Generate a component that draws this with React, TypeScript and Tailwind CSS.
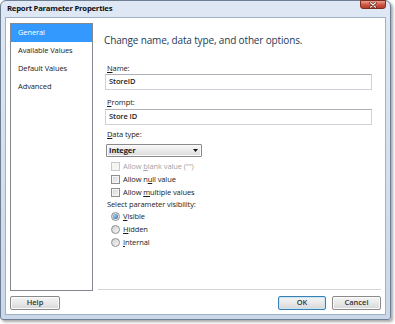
import React from "react";

function Checkbox({ disabled }: { disabled?: boolean }) {
  return disabled ? (
    <span className="w-[9px] h-[9px] shrink-0 border border-[#c9c9c9] bg-[#f5f5f5]" />
  ) : (
    <span className="w-[9px] h-[9px] shrink-0 border border-[#8e8f8f] bg-gradient-to-br from-[#d2d2d2] to-[#f8f8f8] shadow-[inset_0_0_0_1px_#f4f4f4]" />
  );
}

function Radio({ checked }: { checked?: boolean }) {
  return (
    <span className="w-[9px] h-[9px] shrink-0 rounded-full border border-[#8e8f8f] bg-gradient-to-br from-[#d0d0d0] to-[#fafafa] flex items-center justify-center">
      {checked && (
        <span className="w-[5px] h-[5px] rounded-full bg-[radial-gradient(circle_at_35%_35%,#9fd0f5,#1a5ea8)]" />
      )}
    </span>
  );
}

function Button({ children, w, primary }: { children: React.ReactNode; w: string; primary?: boolean }) {
  return (
    <div
      className={
        (primary
          ? "border-[#3c7fb1] shadow-[inset_0_0_0_1px_#c6e6f8] "
          : "border-[#8a8a8a] shadow-[inset_0_0_0_1px_#fbfbfb] ") +
        w +
        " h-[14px] border rounded-[2px] bg-gradient-to-b from-[#f4f4f4] via-[#e9e9e9] to-[#d6d6d6] flex items-center justify-center text-[7.5px] font-semibold text-[#333] leading-none"
      }
    >
      {children}
    </div>
  );
}

export default function App() {
  return (
    <div className="w-[395px] h-[324px] bg-white overflow-hidden font-['Open_Sans',sans-serif] text-[#1b1b1b]">
      <div className="relative w-[391px] h-[320px] border border-[#6e7f94] rounded-t-[6px] rounded-b-[3px] bg-gradient-to-b from-[#dfe8f4] to-[#cad8ea] shadow-[2px_2px_3px_rgba(0,0,0,0.35)] flex flex-col">
        {/* title bar */}
        <div className="h-[16px] shrink-0 flex items-center pl-[6px]">
          <span className="text-[7.75px] font-bold tracking-[-0.25px] leading-none text-[#111]">
            Report Parameter Properties
          </span>
        </div>
        {/* close button */}
        <div className="absolute top-[-1px] right-[4px] w-[26px] h-[9px] rounded-b-[3px] border border-[#7b2b22] bg-gradient-to-b from-[#e9a18f] via-[#cf5a45] to-[#b83a2a] flex items-center justify-center">
          <svg width="8" height="6" viewBox="0 0 8 6">
            <path d="M1.5 0.8 L6.5 5.2 M6.5 0.8 L1.5 5.2" stroke="#5a1c14" strokeWidth="2.4" strokeLinecap="round" />
            <path d="M1.5 0.8 L6.5 5.2 M6.5 0.8 L1.5 5.2" stroke="#ffffff" strokeWidth="1.2" strokeLinecap="round" />
          </svg>
        </div>

        {/* client area */}
        <div className="mx-[4px] mb-[4px] flex-1 bg-white border border-[#9fb1c7] flex flex-col pt-[5px] px-[4px] pb-[4px]">
          <div className="flex gap-[5px] items-start h-[268px]">
            {/* nav */}
            <div className="w-[83px] h-[268px] shrink-0 border border-[#828790] bg-white flex flex-col text-[7.5px] tracking-[-0.1px]">
              <div className="h-[18px] flex items-center pl-[7px] bg-[#3399ff] text-white">General</div>
              <div className="h-[18px] flex items-center pl-[7px]">Available Values</div>
              <div className="h-[18px] flex items-center pl-[7px]">Default Values</div>
              <div className="h-[18px] flex items-center pl-[7px]">Advanced</div>
            </div>

            {/* pane */}
            <div className="flex-1 h-[267px] border-b border-[#d4d4d4] pl-[7px] pr-[9px] pt-[10px] flex flex-col text-[7.5px] tracking-[-0.1px]">
              <div className="-ml-px h-[14px] leading-[14px] text-[10px] tracking-[-0.15px] text-[#243a56]">
                Change name, data type, and other options.
              </div>

              <div className="mt-[15px] h-[12px] leading-[12px] pl-[2px]">
                <u>N</u>ame:
              </div>
              <div className="h-[16px] border border-[#cfd2d8] border-t-[#aeb1b8] flex items-center pl-[3px] font-semibold">
                StoreID
              </div>

              <div className="mt-[6px] h-[12px] leading-[12px] pl-[2px]">
                <u>P</u>rompt:
              </div>
              <div className="mt-[1px] h-[16px] border border-[#cfd2d8] border-t-[#aeb1b8] flex items-center pl-[3px] font-semibold">
                Store ID
              </div>

              <div className="mt-[3px] h-[12px] leading-[12px] pl-[2px]">
                <u>D</u>ata type:
              </div>
              <div className="mt-[4px] ml-[1px] w-[96px] h-[13px] border border-[#8a8a8a] rounded-[1px] bg-gradient-to-b from-[#f7f7f7] via-[#ebebeb] to-[#dadada] shadow-[inset_0_0_0_1px_#fbfbfb] flex items-center justify-between pl-[2px] pr-[3px]">
                <span className="font-bold">Integer</span>
                <svg width="5" height="3" viewBox="0 0 5 3">
                  <path d="M0 0 L5 0 L2.5 3 Z" fill="#111" />
                </svg>
              </div>

              <div className="mt-[3px] flex flex-col">
                <div className="h-[13px] flex items-center pl-[6px] gap-[3px] text-[#a3a3a3]">
                  <Checkbox disabled />
                  <span>
                    Allow <u>b</u>lank value ("")
                  </span>
                </div>
                <div className="h-[13px] flex items-center pl-[6px] gap-[3px]">
                  <Checkbox />
                  <span>
                    Allow n<u>u</u>ll value
                  </span>
                </div>
                <div className="h-[13px] flex items-center pl-[6px] gap-[3px]">
                  <Checkbox />
                  <span>
                    Allow <u>m</u>ultiple values
                  </span>
                </div>
              </div>

              <div className="h-[11px] leading-[11px] pl-[2px]">Select parameter visibility:</div>
              <div className="flex flex-col">
                <div className="h-[13px] flex items-center pl-[6px] gap-[3px]">
                  <Radio checked />
                  <span>
                    <u>V</u>isible
                  </span>
                </div>
                <div className="h-[13px] flex items-center pl-[6px] gap-[3px]">
                  <Radio />
                  <span>
                    <u>H</u>idden
                  </span>
                </div>
                <div className="h-[13px] flex items-center pl-[6px] gap-[3px]">
                  <Radio />
                  <span>
                    <u>I</u>nternal
                  </span>
                </div>
              </div>
            </div>
          </div>

          {/* buttons */}
          <div className="mt-[5px] flex justify-between">
            <Button w="w-[50px]">Help</Button>
            <div className="flex gap-[6px]">
              <Button w="w-[48px]" primary>
                OK
              </Button>
              <Button w="w-[49px]">Cancel</Button>
            </div>
          </div>
        </div>
      </div>
    </div>
  );
}
